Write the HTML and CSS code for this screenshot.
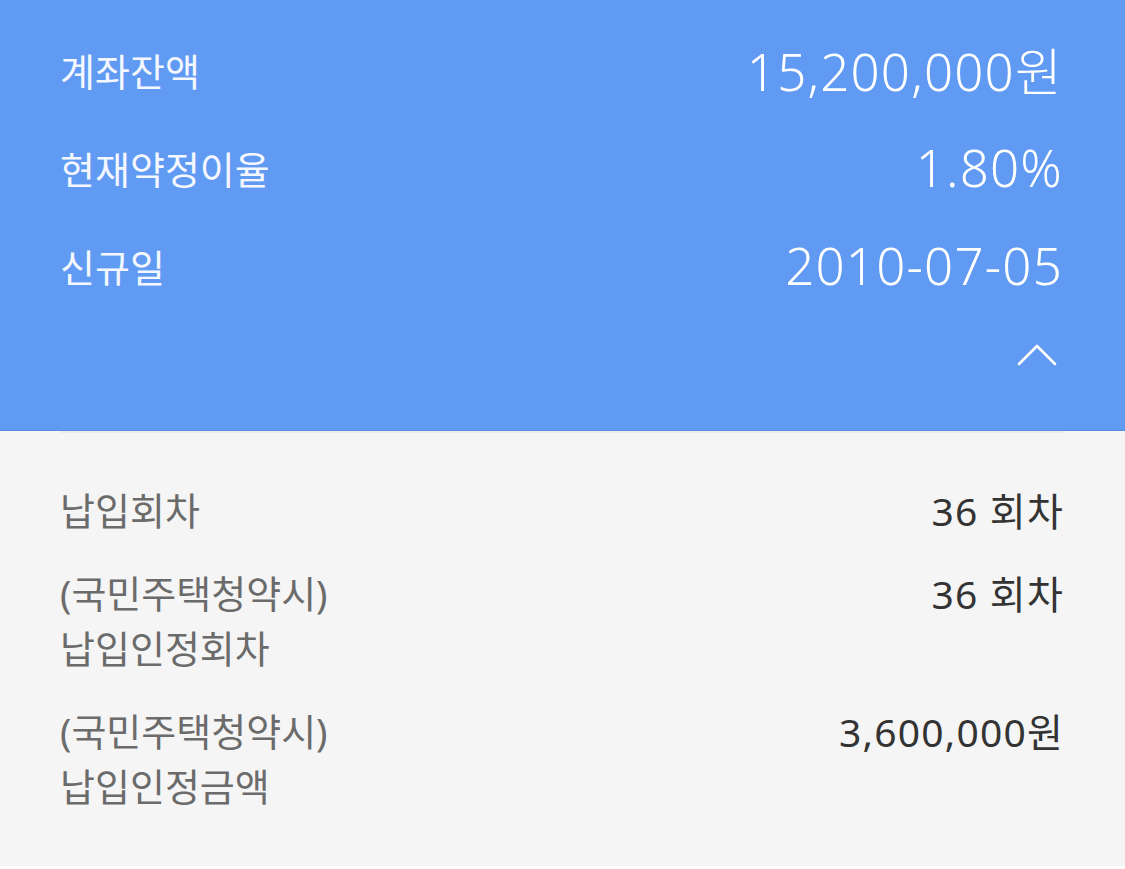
FILE: index.html
```html
<!DOCTYPE html>
<html lang="ko">
<head>
    <meta charset="UTF-8">
    <meta name="viewport" content="width=device-width, initial-scale=1.0">
    <title>청약 계좌 정보</title>
    <link rel="stylesheet" href="styles.css">
</head>
<body>
    <section class="summary">
        <div class="summary-row">
            <span class="summary-label">계좌잔액</span>
            <span class="summary-value">15,200,000원</span>
        </div>
        <div class="summary-row">
            <span class="summary-label">현재약정이율</span>
            <span class="summary-value">1.80%</span>
        </div>
        <div class="summary-row">
            <span class="summary-label">신규일</span>
            <span class="summary-value">2010-07-05</span>
        </div>
        <div class="toggle-row">
            <button class="toggle-btn" type="button" aria-label="접기">
                <svg width="40" height="22" viewBox="0 0 40 22">
                    <polyline points="2,20 20,2 38,20" fill="none" stroke="#fff" stroke-width="2.6" stroke-linecap="round" stroke-linejoin="round"/>
                </svg>
            </button>
        </div>
    </section>

    <section class="details">
        <div class="details-inner">
            <div class="detail-row">
                <span class="detail-label">납입회차</span>
                <span class="detail-value">36 회차</span>
            </div>
            <div class="detail-row">
                <span class="detail-label">(국민주택청약시)<br>납입인정회차</span>
                <span class="detail-value">36 회차</span>
            </div>
            <div class="detail-row">
                <span class="detail-label">(국민주택청약시)<br>납입인정금액</span>
                <span class="detail-value">3,600,000원</span>
            </div>
        </div>
    </section>
</body>
</html>
```

FILE: styles.css
```css
* {
    margin: 0;
    padding: 0;
    box-sizing: border-box;
}

body {
    font-family: 'Noto Sans', 'Noto Sans CJK KR', sans-serif;
    background: #fff;
}

/* 상단 요약 영역 */
.summary {
    background: #609af3;
    border-bottom: 1px solid #5890e8;
    padding: 20px 62px 0 60px;
    height: 431px;
    color: #fff;
}

.summary-row {
    display: flex;
    justify-content: space-between;
    align-items: center;
    height: 98px;
}

.summary-label {
    font-size: 38px;
    color: #f4f7fe;
}

.summary-value {
    font-size: 51px;
    font-weight: 300;
    letter-spacing: 1.2px;
}

.toggle-row {
    display: flex;
    justify-content: flex-end;
    padding-top: 30px;
}

.toggle-btn {
    background: none;
    border: 0;
    width: 40px;
    height: 22px;
    margin-right: 6px;
    display: flex;
}

/* 하단 상세 영역 */
.details {
    background: #f5f5f5;
    height: 435px;
}

.details-inner {
    margin: 0 60px;
    border-top: 2px solid #ececec;
    padding-top: 50px;
    display: flex;
    flex-direction: column;
    gap: 28px;
}

.detail-row {
    display: flex;
    justify-content: space-between;
    align-items: flex-start;
    line-height: 55px;
}

.detail-label {
    font-size: 38px;
    color: #6b6b6b;
}

.detail-value {
    font-size: 39px;
    color: #333;
    letter-spacing: 1.2px;
    margin-right: 1px;
}
```
